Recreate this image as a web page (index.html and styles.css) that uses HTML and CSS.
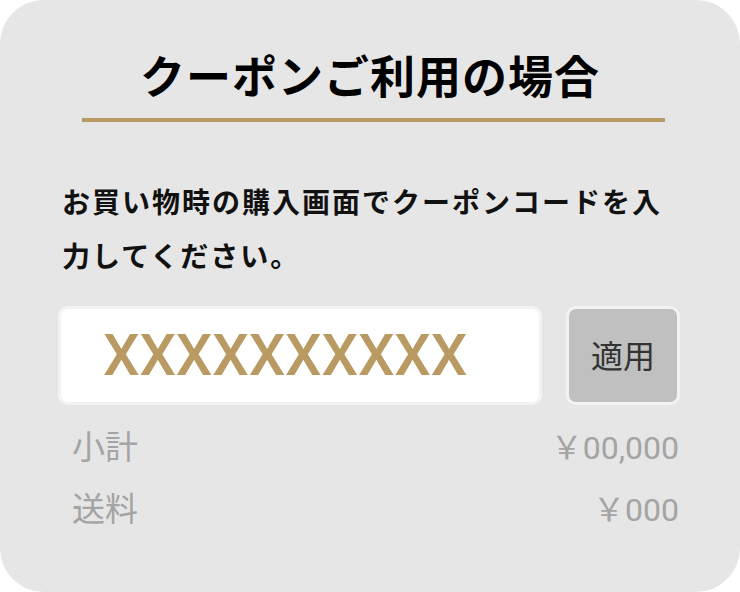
FILE: index.html
```html
<!DOCTYPE html>
<html lang="ja">
<head>
<meta charset="utf-8">
<link rel="stylesheet" href="styles.css">
</head>
<body>
<div class="card">
  <h1 class="title">クーポンご利用の場合</h1>
  <div class="rule"></div>
  <p class="lead">お買い物時の購入画面でクーポンコードを入力してください。</p>
  <div class="form">
    <div class="code">XXXXXXXXXX</div>
    <div class="apply">適用</div>
  </div>
  <div class="row"><span class="label">小計</span><span class="price">￥00,000</span></div>
  <div class="row"><span class="label">送料</span><span class="price">￥000</span></div>
</div>
</body>
</html>
```
FILE: styles.css
```css
html, body {
  margin: 0;
  padding: 0;
  background: #ffffff;
}
.card {
  width: 740px;
  height: 592px;
  box-sizing: border-box;
  background: #e6e6e6;
  border-radius: 44px;
  overflow: hidden;
  padding-top: 48px;
  font-family: "Noto Sans CJK JP", "Noto Sans", sans-serif;
}
.title {
  margin: 0;
  text-align: center;
  font-size: 45px;
  line-height: 54px;
  font-weight: 700;
  color: #000;
  letter-spacing: 1px;
}
.rule {
  margin: 16px 0 0 82px;
  width: 583px;
  height: 4px;
  background: #b89a62;
}
.lead {
  margin: 52px 70px 0 62px;
  font-size: 28px;
  line-height: 54px;
  font-weight: 700;
  letter-spacing: 2px;
  color: #111;
}
.form {
  display: flex;
  gap: 24px;
  margin: 24px 0 0 58px;
  height: 99px;
}
.code {
  width: 484px;
  box-sizing: border-box;
  border: 3px solid #f3f3f3;
  border-radius: 10px;
  background: #fff;
  padding-left: 42px;
  font-family: Roboto, "Liberation Sans", sans-serif;
  font-size: 58px;
  font-weight: 500;
  letter-spacing: -0.2px;
  line-height: 93px;
  color: #b89a62;
}
.apply {
  width: 114px;
  box-sizing: border-box;
  border: 3px solid #f3f3f3;
  border-radius: 10px;
  background: #c0c0c0;
  display: flex;
  align-items: center;
  justify-content: center;
  font-size: 32px;
  color: #333;
  padding-bottom: 4px;
}
.row {
  display: flex;
  justify-content: space-between;
  margin: 0 61px 0 72px;
  height: 62px;
  align-items: center;
  color: #a4a4a4;
  font-size: 33px;
}
.form + .row {
  margin-top: 9px;
}
.price {
  font-family: Roboto, "Noto Sans CJK JP", sans-serif;
  font-size: 32px;
}
```
